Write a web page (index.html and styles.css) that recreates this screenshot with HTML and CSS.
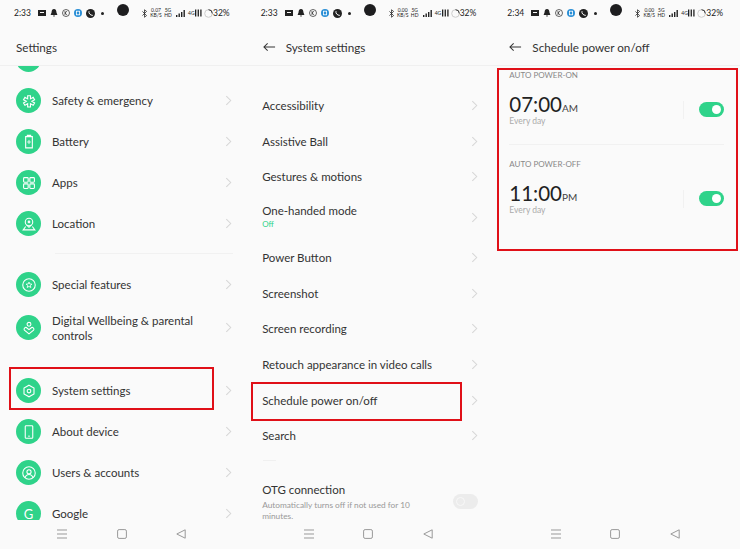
FILE: index.html
```html
<!DOCTYPE html>
<html lang="en">
<head>
  <meta charset="UTF-8">
  <title>Schedule power on/off</title>
  <meta name="viewport" content="width=device-width, initial-scale=1.0">
  <link rel="stylesheet" href="styles.css">
</head>
<body>
  <!-- shared icons -->
  <svg class="sprite" aria-hidden="true">
    <symbol id="chev" viewBox="0 0 8 12"><path d="M1.5 1l5 5-5 5" fill="none" stroke="currentColor" stroke-width="1.2"/></symbol>
    <symbol id="back" viewBox="0 0 14 10"><path d="M13 5H1M5 1L1 5l4 4" fill="none" stroke="currentColor" stroke-width="1.1"/></symbol>
    <symbol id="menu" viewBox="0 0 10 10"><path d="M0 1h10M0 5h10M0 9h10" stroke="currentColor" stroke-width="1"/></symbol>
    <symbol id="square" viewBox="0 0 10 10"><rect x=".6" y=".6" width="8.8" height="8.8" rx="1.5" fill="none" stroke="currentColor" stroke-width="1"/></symbol>
    <symbol id="tri" viewBox="0 0 10 10"><path d="M9.2 .8v8.400L.8 5z" fill="none" stroke="currentColor" stroke-width="1" stroke-linejoin="round"/></symbol>
    <symbol id="bt" viewBox="0 0 6 10"><path d="M.5 2.500l5 5L3 9.500V.5l2.500 2-5 5" fill="none" stroke="currentColor" stroke-width=".9"/></symbol>
    <symbol id="tray" viewBox="0 0 8 8"><path d="M0 1h8v6H0z" fill="currentColor"/><path d="M2 3.500h4" stroke="#fafafa" stroke-width="1"/></symbol>
    <symbol id="bell" viewBox="0 0 8 8"><path d="M4 0C2.200 0 1.600 1.500 1.600 3.200L.6 6h6.800l-1-2.800C6.400 1.500 5.800 0 4 0zM3 6.600h2L4 8z" fill="currentColor"/></symbol>
    <symbol id="ring-r" viewBox="0 0 8 8"><circle cx="4" cy="4" r="3.500" fill="none" stroke="currentColor" stroke-width=".7"/><path d="M3 2v4M5.200 2L3 4l2.200 2" fill="none" stroke="currentColor" stroke-width=".7"/></symbol>
    <symbol id="blue" viewBox="0 0 8 8"><circle cx="4" cy="4" r="4" fill="#2b8fd6"/><rect x="2.400" y="2.200" width="3.200" height="3.600" fill="none" stroke="#fff" stroke-width=".8"/></symbol>
    <symbol id="call" viewBox="0 0 9 9"><circle cx="4.500" cy="4.500" r="4.500" fill="currentColor"/><path d="M3 2.200c-.6 2 1.200 4.200 3.800 4.200" fill="none" stroke="#fafafa" stroke-width="1"/></symbol>
    <symbol id="bars" viewBox="0 0 9 7"><path d="M0 5h1.400v2H0zM2.500 3.500h1.400V7H2.500zM5 2h1.400v5H5zM7.500 0h1.400v7H7.500z" fill="currentColor"/></symbol>
    <symbol id="cell" viewBox="0 0 8 8"><path d="M0 0h1.500v8H0zM3 0h1.500v8H3zM6 0h1.500v8H6z" fill="currentColor"/></symbol>
    <symbol id="batt" viewBox="0 0 9 9"><circle cx="4.500" cy="4.500" r="3.800" fill="none" stroke="#ccc" stroke-width="1"/><path d="M4.500.7a3.800 3.800 0 0 1 3.800 3.800" fill="none" stroke="#333" stroke-width="1"/></symbol>
    <symbol id="i-safety" viewBox="0 0 24 24"><path d="M10 5h4v4.500l3.900-2.200 2 3.400L16 13l3.900 2.300-2 3.400-3.900-2.200V21h-4v-4.500l-3.900 2.200-2-3.400L8 13l-3.900-2.300 2-3.400L10 9.500z" transform="translate(2 1.500) scale(.84)" fill="none" stroke="#fff" stroke-width="1.600"/></symbol>
    <symbol id="i-battery" viewBox="0 0 24 24"><path d="M10 5V4h4v1M8 5.500h8V19H8z" fill="none" stroke="#fff" stroke-width="1.300"/><path d="M12 9.500v5M9.800 12h4.400" stroke="#fff" stroke-width="1"/></symbol>
    <symbol id="i-apps" viewBox="0 0 24 24"><g fill="none" stroke="#fff" stroke-width="1.300"><rect x="5.500" y="5.500" width="5.500" height="5.500" rx="1"/><rect x="13" y="5.500" width="5.500" height="5.500" rx="1"/><rect x="5.500" y="13" width="5.500" height="5.500" rx="1"/><rect x="13" y="13" width="5.500" height="5.500" rx="1"/></g></symbol>
    <symbol id="i-location" viewBox="0 0 24 24"><g fill="none" stroke="#fff" stroke-width="1.300"><circle cx="12" cy="9.500" r="4.500"/><path d="M9 13l3 3 3-3M8 15l-3 4h14l-3-4"/><circle cx="12" cy="9.500" r="1"/></g></symbol>
    <symbol id="i-special" viewBox="0 0 24 24"><circle cx="12" cy="12" r="7.500" fill="none" stroke="#fff" stroke-width="1.300"/><path d="M12 8.500l1 2.300 2.500.2-1.900 1.600.6 2.400-2.200-1.300-2.200 1.300.6-2.400L8.500 11l2.500-.2z" fill="none" stroke="#fff" stroke-width="1"/></symbol>
    <symbol id="i-wellbeing" viewBox="0 0 24 24"><g fill="none" stroke="#fff" stroke-width="1.300"><circle cx="12" cy="7.500" r="2.300"/><path d="M12 19l-5.500-4.500c-1.500-2 1.500-4.500 3-2.500L12 14l2.500-2c1.500-2 4.500.5 3 2.500z"/></g></symbol>
    <symbol id="i-system" viewBox="0 0 24 24"><g fill="none" stroke="#fff" stroke-width="1.300"><path d="M12 5l6 3.500v7L12 19l-6-3.500v-7z"/><circle cx="12" cy="12" r="2.200"/></g></symbol>
    <symbol id="i-device" viewBox="0 0 24 24"><rect x="7.500" y="4.500" width="9" height="15" rx="1" fill="none" stroke="#fff" stroke-width="1.300"/><path d="M11 17h2" stroke="#fff" stroke-width="1.200"/></symbol>
    <symbol id="i-users" viewBox="0 0 24 24"><g fill="none" stroke="#fff" stroke-width="1.300"><circle cx="12" cy="12" r="7.500"/><circle cx="12" cy="10.500" r="2.500"/><path d="M7.500 17.500c1-5 8-5 9 0"/></g></symbol>
  </svg>

  <main class="screens">

    <!-- settings list -->
    <section class="phone">
      <div class="status">
        <span class="clock">2:33</span>
        <svg class="st-icon"><use href="#tray"/></svg>
        <svg class="st-icon"><use href="#bell"/></svg>
        <svg class="st-icon"><use href="#ring-r"/></svg>
        <svg class="st-icon"><use href="#blue"/></svg>
        <svg class="st-icon wide"><use href="#call"/></svg>
        <span class="st-dot"></span>
        <span class="camera"></span>
        <svg class="st-bt"><use href="#bt"/></svg>
        <span class="speed">0.07<br>KB/S</span>
        <span class="net">5G<br>HD</span>
        <svg class="st-bars"><use href="#bars"/></svg>
        <span class="net net-4g">4G</span>
        <svg class="st-cell"><use href="#cell"/></svg>
        <svg class="st-batt"><use href="#batt"/></svg>
        <span class="level">32%</span>
      </div>
      <header class="title-bar"><h1>Settings</h1></header>
      <div class="list list-main">
        <div class="row"><span class="badge"></span><span class="label">Privacy</span><svg class="chev"><use href="#chev"/></svg></div>
        <div class="row"><span class="badge"><svg><use href="#i-safety"/></svg></span><span class="label">Safety &amp; emergency</span><svg class="chev"><use href="#chev"/></svg></div>
        <div class="row"><span class="badge"><svg><use href="#i-battery"/></svg></span><span class="label">Battery</span><svg class="chev"><use href="#chev"/></svg></div>
        <div class="row"><span class="badge"><svg><use href="#i-apps"/></svg></span><span class="label">Apps</span><svg class="chev"><use href="#chev"/></svg></div>
        <div class="row"><span class="badge"><svg><use href="#i-location"/></svg></span><span class="label">Location</span><svg class="chev"><use href="#chev"/></svg></div>
        <div class="sep"></div>
        <div class="row"><span class="badge"><svg><use href="#i-special"/></svg></span><span class="label">Special features</span><svg class="chev"><use href="#chev"/></svg></div>
        <div class="row row-tall"><span class="badge"><svg><use href="#i-wellbeing"/></svg></span><span class="label">Digital Wellbeing &amp; parental controls</span><svg class="chev"><use href="#chev"/></svg></div>
        <div class="gap"></div>
        <div class="row"><span class="badge"><svg><use href="#i-system"/></svg></span><span class="label">System settings</span><svg class="chev"><use href="#chev"/></svg></div>
        <div class="row"><span class="badge"><svg><use href="#i-device"/></svg></span><span class="label">About device</span><svg class="chev"><use href="#chev"/></svg></div>
        <div class="row"><span class="badge"><svg><use href="#i-users"/></svg></span><span class="label">Users &amp; accounts</span><svg class="chev"><use href="#chev"/></svg></div>
        <div class="row"><span class="badge badge-g">G</span><span class="label">Google</span><svg class="chev"><use href="#chev"/></svg></div>
      </div>
      <nav class="nav-bar">
        <svg><use href="#menu"/></svg>
        <svg><use href="#square"/></svg>
        <svg><use href="#tri"/></svg>
      </nav>
      <div class="mark mark-system"></div>
    </section>

    <!-- system settings -->
    <section class="phone">
      <div class="status">
        <span class="clock">2:33</span>
        <svg class="st-icon"><use href="#tray"/></svg>
        <svg class="st-icon"><use href="#bell"/></svg>
        <svg class="st-icon"><use href="#ring-r"/></svg>
        <svg class="st-icon"><use href="#blue"/></svg>
        <svg class="st-icon wide"><use href="#call"/></svg>
        <span class="st-dot"></span>
        <span class="camera"></span>
        <svg class="st-bt"><use href="#bt"/></svg>
        <span class="speed">0.00<br>KB/S</span>
        <span class="net">5G<br>HD</span>
        <svg class="st-bars"><use href="#bars"/></svg>
        <span class="net net-4g">4G</span>
        <svg class="st-cell"><use href="#cell"/></svg>
        <svg class="st-batt"><use href="#batt"/></svg>
        <span class="level">32%</span>
      </div>
      <header class="title-bar"><svg class="back"><use href="#back"/></svg><h1>System settings</h1></header>
      <div class="list list-system">
        <div class="item"><span class="label">Accessibility</span><svg class="chev"><use href="#chev"/></svg></div>
        <div class="item"><span class="label">Assistive Ball</span><svg class="chev"><use href="#chev"/></svg></div>
        <div class="item"><span class="label">Gestures &amp; motions</span><svg class="chev"><use href="#chev"/></svg></div>
        <div class="item item-tall">
          <div class="label">One-handed mode<div class="state">Off</div></div>
          <svg class="chev"><use href="#chev"/></svg>
        </div>
        <div class="item"><span class="label">Power Button</span><svg class="chev"><use href="#chev"/></svg></div>
        <div class="item"><span class="label">Screenshot</span><svg class="chev"><use href="#chev"/></svg></div>
        <div class="item"><span class="label">Screen recording</span><svg class="chev"><use href="#chev"/></svg></div>
        <div class="item"><span class="label">Retouch appearance in video calls</span><svg class="chev"><use href="#chev"/></svg></div>
        <div class="item"><span class="label">Schedule power on/off</span><svg class="chev"><use href="#chev"/></svg></div>
        <div class="item"><span class="label">Search</span><svg class="chev"><use href="#chev"/></svg></div>
        <div class="short-rule"></div>
        <div class="item item-otg">
          <div class="label">OTG connection<div class="hint">Automatically turns off if not used for 10 minutes.</div></div>
          <span class="toggle toggle-off"></span>
        </div>
      </div>
      <nav class="nav-bar">
        <svg><use href="#menu"/></svg>
        <svg><use href="#square"/></svg>
        <svg><use href="#tri"/></svg>
      </nav>
      <div class="mark mark-schedule"></div>
    </section>

    <!-- schedule power on/off -->
    <section class="phone">
      <div class="status">
        <span class="clock">2:34</span>
        <svg class="st-icon"><use href="#tray"/></svg>
        <svg class="st-icon"><use href="#bell"/></svg>
        <svg class="st-icon"><use href="#ring-r"/></svg>
        <svg class="st-icon"><use href="#blue"/></svg>
        <svg class="st-icon wide"><use href="#call"/></svg>
        <span class="st-dot"></span>
        <span class="camera"></span>
        <svg class="st-bt"><use href="#bt"/></svg>
        <span class="speed">0.00<br>KB/S</span>
        <span class="net">5G<br>HD</span>
        <svg class="st-bars"><use href="#bars"/></svg>
        <span class="net net-4g">4G</span>
        <svg class="st-cell"><use href="#cell"/></svg>
        <svg class="st-batt"><use href="#batt"/></svg>
        <span class="level">32%</span>
      </div>
      <header class="title-bar"><svg class="back"><use href="#back"/></svg><h1>Schedule power on/off</h1></header>
      <div class="list list-schedule">
        <div class="sched sched-on">
          <div class="sched-label">AUTO POWER-ON</div>
          <div class="sched-row">
            <div>
              <div class="sched-time">07:00<small>AM</small></div>
              <div class="sched-days">Every day</div>
            </div>
            <span class="vline"></span>
            <span class="toggle"></span>
          </div>
        </div>
        <div class="sched">
          <div class="sched-label">AUTO POWER-OFF</div>
          <div class="sched-row">
            <div>
              <div class="sched-time">11:00<small>PM</small></div>
              <div class="sched-days">Every day</div>
            </div>
            <span class="vline"></span>
            <span class="toggle"></span>
          </div>
        </div>
      </div>
      <nav class="nav-bar">
        <svg><use href="#menu"/></svg>
        <svg><use href="#square"/></svg>
        <svg><use href="#tri"/></svg>
      </nav>
      <div class="mark mark-power"></div>
    </section>

  </main>
</body>
</html>
```

FILE: styles.css
```css
body {
  font-family: Lato, "Open Sans", sans-serif;
  margin: 0;
  background: #fff;
  color: #333;
}
.sprite {
  position: absolute;
  width: 0;
  height: 0;
}
.screens {
  display: grid;
  grid-template-columns: repeat(3, 1fr);
  height: 549px;
  overflow: hidden;
}
.phone {
  position: relative;
  display: flex;
  flex-direction: column;
  background: #fafafa;
  height: 549px;
}

/* status bar */
.status {
  display: flex;
  align-items: center;
  height: 26px;
  padding-left: 14px;
  color: #222;
  font-size: 8.500px;
}
.clock {
  width: 24px;
}
.st-icon {
  width: 8px;
  height: 8px;
  margin-right: 4px;
}
.st-icon.wide {
  width: 9px;
  height: 9px;
}
.st-dot {
  width: 3px;
  height: 3px;
  margin-left: 2px;
  border-radius: 50%;
  background: #222;
}
.camera {
  width: 12px;
  height: 12px;
  margin: -6px 13px 0 13px;
  border-radius: 50%;
  background: #1d1d1f;
}
.st-bt {
  width: 5px;
  height: 9px;
  margin-right: 3px;
}
.speed, .net {
  font-size: 5px;
  line-height: 5px;
  text-align: center;
  margin-right: 2px;
}
.speed {
  width: 12px;
}
.net {
  width: 8px;
}
.net-4g {
  width: 6px;
  margin-right: 1px;
}
.st-bars {
  width: 9px;
  height: 7px;
  margin: 0 3px 0 2px;
}
.st-cell {
  width: 7px;
  height: 8px;
  margin-right: 2px;
}
.st-batt {
  width: 9px;
  height: 9px;
}
.level {
  font-size: 8.500px;
}

/* title bar */
.title-bar {
  display: flex;
  align-items: center;
  box-sizing: border-box;
  height: 40px;
  padding: 3px 0 0 16px;
  flex: none;
  border-bottom: 1px solid #f0f0f0;
}
.title-bar h1 {
  margin: 0;
  font-size: 11.700px;
  font-weight: 400;
  color: #333;
}
.back {
  width: 13px;
  height: 10px;
  margin-right: 10px;
  color: #333;
}

/* lists */
.list {
  flex: 1;
  min-height: 0;
  overflow: hidden;
}
.list-main > .row:first-child {
  margin-top: -27px;
}
.row {
  display: flex;
  align-items: center;
  height: 41px;
  padding: 0 15px 0 16px;
}
.row-tall {
  height: 45px;
}
.badge {
  display: flex;
  align-items: center;
  justify-content: center;
  flex: none;
  width: 25px;
  height: 25px;
  margin-right: 11px;
  border-radius: 50%;
  background: #2fd38a;
  color: #fff;
  font-size: 13px;
}
.badge svg {
  width: 20px;
  height: 20px;
}
.label {
  flex: 1;
  font-size: 11.500px;
  line-height: 15px;
  color: #333;
}
.row-tall .label {
  padding-right: 8px;
}
.chev {
  flex: none;
  width: 7px;
  height: 11px;
  color: #d6d6d6;
}
.sep {
  height: 9px;
  margin: 0 14px 10px 55px;
  border-bottom: 1px solid #f1f1f1;
}
.gap {
  height: 20px;
}
.list-system {
  padding-top: 22px;
}
.item {
  display: flex;
  align-items: center;
  height: 35.600px;
  padding: 0 15px 0 15.500px;
}
.item-tall {
  height: 45.200px;
}
.state {
  font-size: 8px;
  line-height: 13px;
  color: #2fd38a;
}
.short-rule {
  width: 13px;
  height: 1px;
  margin: 6px 0 18px 16px;
  background: #f0f0f0;
}
.item-otg {
  height: 46px;
}
.item-otg .label {
  padding-right: 22px;
}
.hint {
  margin-top: 3px;
  font-size: 8.300px;
  line-height: 11px;
  color: #999;
}

/* toggles */
.toggle {
  position: relative;
  flex: none;
  width: 25px;
  height: 15px;
  border-radius: 8px;
  background: #2fd38a;
}
.toggle::after {
  content: "";
  position: absolute;
  top: 3px;
  right: 3px;
  width: 9px;
  height: 9px;
  border-radius: 50%;
  background: #fff;
}
.toggle-off {
  background: #ececec;
}
.toggle-off::after {
  right: auto;
  left: 3px;
  box-sizing: border-box;
  border: 1.500px solid #f8f8f8;
  background: transparent;
}

/* schedule */
.list-schedule {
  padding: 4px 16px 0;
}
.sched {
  height: 88px;
}
.sched-on {
  height: 74px;
  margin-bottom: 14px;
  border-bottom: 1px solid #f1f1f1;
}
.sched-label {
  font-size: 8px;
  line-height: 11px;
  color: #888;
}
.sched-row {
  display: flex;
  align-items: center;
  margin-top: 11.500px;
}
.sched-row > div:first-child {
  flex: 1;
}
.sched-time {
  font-size: 20.500px;
  line-height: 23px;
  color: #222;
}
.sched-time small {
  font-size: 10px;
  line-height: 10px;
  color: #444;
}
.sched-days {
  font-size: 8.500px;
  line-height: 11px;
  color: #aaa;
}
.vline {
  width: 1px;
  height: 18px;
  margin-right: 15px;
  background: #f1f1f1;
}

/* bottom nav */
.nav-bar {
  display: flex;
  align-items: center;
  justify-content: center;
  gap: 49.500px;
  flex: none;
  box-sizing: border-box;
  height: 29px;
  padding: 0 3px 2px 0;
  color: #999;
}
.nav-bar svg {
  width: 10px;
  height: 10px;
}

/* red annotation boxes */
.mark {
  position: absolute;
  box-sizing: border-box;
  border: 2px solid #e01018;
}
.mark-system {
  left: 9px;
  top: 367px;
  width: 205px;
  height: 43px;
}
.mark-schedule {
  left: 4px;
  top: 382px;
  width: 211px;
  height: 39px;
}
.mark-power {
  left: 3.500px;
  top: 68px;
  width: 241px;
  height: 183px;
}
```
